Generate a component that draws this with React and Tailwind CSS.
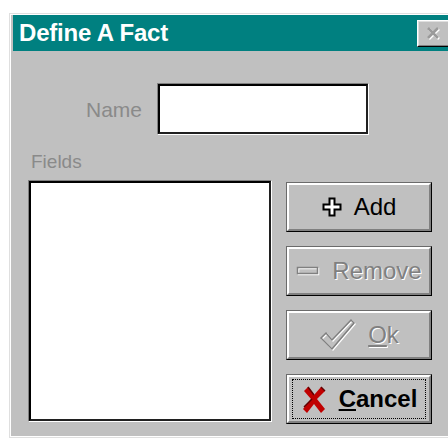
import React from 'react'

// Win 3.x style bevels built from nested borders
const btnOuter = 'border border-t-[#6b6b6b] border-l-[#6b6b6b] border-r-black border-b-black'
const btnInner = 'border-2 border-t-white border-l-white border-r-[#808080] border-b-[#808080]'
const fieldOuter = 'border border-t-[#808080] border-l-[#808080] border-r-white border-b-white'
const fieldInner = 'border-2 border-t-black border-l-black border-r-[#202020] border-b-[#202020]'
const etched = '[text-shadow:1px_1px_0_#fff]'

function PlusIcon() {
  return (
    <svg width="20" height="20" viewBox="0 0 20 20">
      <path d="M7.5 1.5h5v6h6v5h-6v6h-5v-6h-6v-5h6z" fill="#fff" stroke="#000" strokeWidth="2" />
    </svg>
  )
}

function MinusIcon() {
  return (
    <svg width="24" height="12" viewBox="0 0 24 12">
      <rect x="2.5" y="3.5" width="20" height="6" fill="none" stroke="#fff" strokeWidth="1.5" />
      <rect x="1.5" y="2.5" width="20" height="6" fill="none" stroke="#808080" strokeWidth="1.5" />
    </svg>
  )
}

function CheckIcon() {
  return (
    <svg width="37" height="34" viewBox="0 0 37 34">
      <path d="M2 20l5-5 6 7L32 2l3 3L13 31z" fill="none" stroke="#fff" strokeWidth="1.5" transform="translate(1 1)" />
      <path d="M2 20l5-5 6 7L32 2l3 3L13 31z" fill="none" stroke="#808080" strokeWidth="1.5" />
    </svg>
  )
}

function CrossIcon() {
  return (
    <svg width="26" height="28" viewBox="0 0 26 28">
      <path d="M3 6l4-4 6 8 7-8 4 4-8 8 8 10-4 4-7-9-7 9-4-4 8-10z" fill="#c00000" />
      <path d="M7 2l6 8M20 2l4 4M3 22l8-8" stroke="#600000" strokeWidth="1.5" fill="none" />
    </svg>
  )
}

function CloseGlyph() {
  return (
    <svg width="16" height="14" viewBox="0 0 16 14">
      <path d="M3 2l10 10M13 2L3 12" stroke="#fff" strokeWidth="2.5" transform="translate(1 1)" />
      <path d="M3 2l10 10M13 2L3 12" stroke="#9a9a9a" strokeWidth="2.5" />
    </svg>
  )
}

function Button({ children, disabled, isDefault }) {
  const label = isDefault ? (
    <div className="h-[40px] w-[134px] border border-dotted border-black flex items-center justify-center gap-3">
      {children}
    </div>
  ) : (
    <div className={`flex items-center justify-center gap-3 ${disabled ? `text-[#808080] ${etched}` : 'text-black'}`}>
      {children}
    </div>
  )
  return (
    <div className={`h-[50px] ${btnOuter}`}>
      <div className={`h-full ${btnInner} bg-[#c0c0c0] flex items-center justify-center`}>{label}</div>
    </div>
  )
}

function Field({ className }) {
  return (
    <div className={`${className} ${fieldOuter}`}>
      <div className={`h-full ${fieldInner} bg-white`} />
    </div>
  )
}

export default function App() {
  return (
    <div className="w-[448px] h-[440px] bg-white overflow-hidden [font-family:'Liberation_Sans',Arial,sans-serif]">
      <div className="ml-[9px] mt-[13px] w-[460px] h-[425px] border border-t-[#dfdfdf] border-l-[#dfdfdf] border-r-black border-b-[#dfdfdf]">
        <div className="h-full border border-t-white border-l-white border-r-[#808080] border-b-white bg-[#c0c0c0] pl-[1px] flex flex-col">
          {/* caption */}
          <div className="ml-[1px] h-[36px] bg-[#008080] flex items-center pl-[6px] pr-[14px]">
            <span className="text-white font-bold text-[24px] tracking-[-0.2px] leading-none">Define A Fact</span>
            <div className="ml-auto w-[36px] h-[27px] border border-t-white border-l-white border-r-black border-b-black">
              <div className="h-full border border-t-[#dfdfdf] border-l-[#dfdfdf] border-r-[#808080] border-b-[#808080] bg-[#c0c0c0] flex items-center justify-start pl-[6px]">
                <CloseGlyph />
              </div>
            </div>
          </div>

          {/* body */}
          <div className="flex flex-col pl-[16px] pt-[32px]">
            <div className="flex items-center">
              <span className="w-[115px] pr-[1px] text-right text-[#8a8a8a] text-[21px] leading-none">Name</span>
              <Field className="ml-[14px] w-[212px] h-[52px]" />
            </div>

            <span className="mt-[16px] ml-[3px] text-[#8a8a8a] text-[19px] leading-[22px]">Fields</span>

            <div className="mt-[7px] flex gap-[14px]">
              <Field className="w-[244px] h-[242px]" />
              <div className="w-[146px] pt-[2px] flex flex-col gap-[14px]">
                <Button>
                  <PlusIcon />
                  <span className="text-[24px] leading-none">Add</span>
                </Button>
                <Button disabled>
                  <MinusIcon />
                  <span className="text-[24px] leading-none">Remove</span>
                </Button>
                <Button disabled>
                  <CheckIcon />
                  <span className="text-[24px] leading-none"><span className="underline underline-offset-2">O</span>k</span>
                </Button>
                <Button isDefault>
                  <CrossIcon />
                  <span className="text-[24px] font-bold leading-none"><span className="underline underline-offset-2">C</span>ancel</span>
                </Button>
              </div>
            </div>
          </div>
        </div>
      </div>
    </div>
  )
}
